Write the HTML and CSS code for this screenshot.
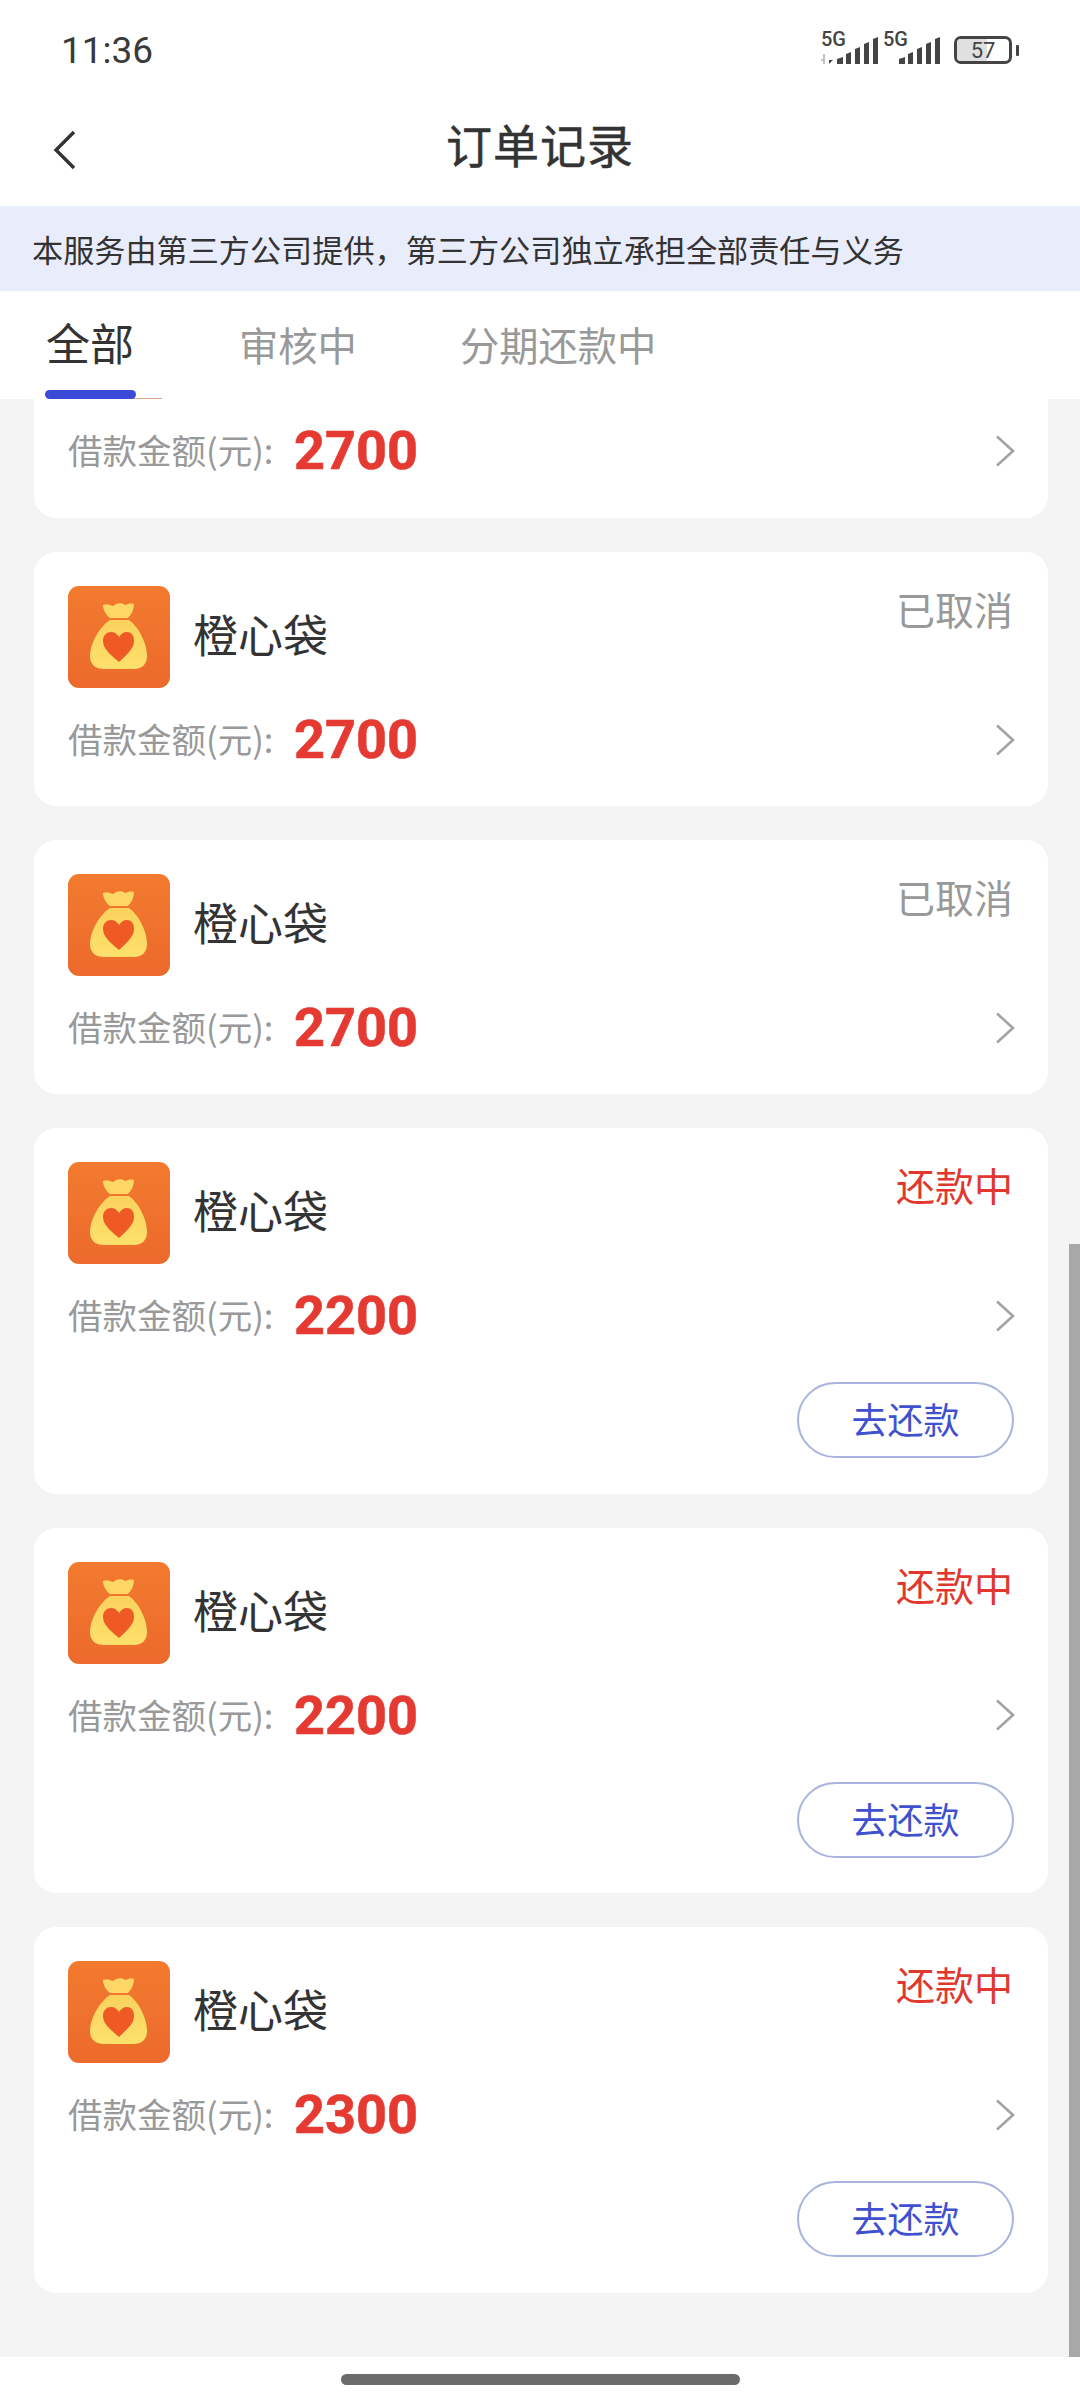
FILE: index.html
```html
<!DOCTYPE html>
<html lang="zh-CN">
<head>
  <meta charset="UTF-8">
  <meta name="viewport" content="width=device-width, initial-scale=1.0">
  <title>订单记录</title>
  <link rel="stylesheet" href="styles.css">
</head>
<body>
  <svg class="defs" width="0" height="0">
    <defs>
      <linearGradient id="bag-bg" x1="0" y1="0" x2="0" y2="1">
        <stop offset="0" stop-color="#f27a2e"/>
        <stop offset="1" stop-color="#ec6a2c"/>
      </linearGradient>
      <linearGradient id="bag-fill" x1="0" y1="0" x2="0" y2="1">
        <stop offset="0" stop-color="#fad25e"/>
        <stop offset="1" stop-color="#fde06c"/>
      </linearGradient>
      <symbol id="logo" viewBox="0 0 102 102">
        <rect width="102" height="102" rx="11" fill="url(#bag-bg)"/>
        <path d="M35 19c4-2 7 0 10 1 3-3 9-4 12-1 3-1 6-2 9-1 0 5-2 10-6 14H42c-4-3-7-8-7-13z" fill="#fcd766"/>
        <path d="M42 34h19c10 7 18 24 18 36 0 9-6 13-13 13H36c-8 0-14-4-14-13 0-12 9-29 20-36z" fill="url(#bag-fill)"/>
        <path d="M51 76C43 69 35 63 35 55c0-6 4-9 8-9 4 0 6 2 8 5 2-3 4-5 8-5 4 0 7 3 7 9 0 8-8 14-15 21z" fill="#ef5a24"/>
      </symbol>
      <symbol id="chevron" viewBox="0 0 20 34">
        <path d="M2 2.5 18 17 2 31.5" fill="none" stroke="#a3a3a3" stroke-width="2.6"/>
      </symbol>
      <symbol id="bars" viewBox="0 0 42 27">
        <path d="M0 27v-5l6-2v7zM9 27V17l5-2v12zM18 27V12l5-2v17zM27 27V7l5-2v22zM36 27V2l5-2v27z" fill="#444"/>
      </symbol>
    </defs>
  </svg>

  <div class="status-bar">
    <span class="time">11:36</span>
    <div class="status-icons">
      <div class="net">
        <span class="net-label">5G</span>
        <svg class="arrows" width="13" height="10" viewBox="0 0 13 10">
          <path d="M3 0v10M0 6h3" stroke="#b5b5b5" stroke-width="1.6" fill="none"/>
          <path d="M8 0v10l4-4H8" fill="#444"/>
        </svg>
        <svg class="bars"><use href="#bars"/></svg>
      </div>
      <div class="net net-second">
        <span class="net-label">5G</span>
        <svg class="bars"><use href="#bars"/></svg>
      </div>
      <div class="battery">
        <div class="battery-level"></div>
        <span class="battery-text">57</span>
      </div>
      <div class="battery-tip"></div>
    </div>
  </div>

  <div class="nav">
    <svg class="back" width="28" height="42" viewBox="0 0 28 42">
      <path d="M24 3 6 21l18 18" fill="none" stroke="#333" stroke-width="3.4"/>
    </svg>
    <h1 class="title">订单记录</h1>
  </div>

  <div class="notice">本服务由第三方公司提供，第三方公司独立承担全部责任与义务</div>

  <div class="tabs">
    <div class="tab active">全部</div>
    <div class="tab tab-audit">审核中</div>
    <div class="tab tab-repay">分期还款中</div>
    <div class="tab-line"></div>
    <div class="tab-peek"></div>
  </div>

  <div class="list">
    <div class="list-inner">
      <div class="card card-cut">
        <div class="row"><span class="label">借款金额(元):</span><span class="amount">2700</span><svg class="chev"><use href="#chevron"/></svg></div>
      </div>
      <div class="card">
        <div class="head"><svg class="logo"><use href="#logo"/></svg><span class="name">橙心袋</span><span class="state off">已取消</span></div>
        <div class="row"><span class="label">借款金额(元):</span><span class="amount">2700</span><svg class="chev"><use href="#chevron"/></svg></div>
      </div>
      <div class="card">
        <div class="head"><svg class="logo"><use href="#logo"/></svg><span class="name">橙心袋</span><span class="state off">已取消</span></div>
        <div class="row"><span class="label">借款金额(元):</span><span class="amount">2700</span><svg class="chev"><use href="#chevron"/></svg></div>
      </div>
      <div class="card card-tall">
        <div class="head"><svg class="logo"><use href="#logo"/></svg><span class="name">橙心袋</span><span class="state on">还款中</span></div>
        <div class="row"><span class="label">借款金额(元):</span><span class="amount">2200</span><svg class="chev"><use href="#chevron"/></svg></div>
        <div class="actions"><div class="btn">去还款</div></div>
      </div>
      <div class="card card-tall">
        <div class="head"><svg class="logo"><use href="#logo"/></svg><span class="name">橙心袋</span><span class="state on">还款中</span></div>
        <div class="row"><span class="label">借款金额(元):</span><span class="amount">2200</span><svg class="chev"><use href="#chevron"/></svg></div>
        <div class="actions"><div class="btn">去还款</div></div>
      </div>
      <div class="card card-tall">
        <div class="head"><svg class="logo"><use href="#logo"/></svg><span class="name">橙心袋</span><span class="state on">还款中</span></div>
        <div class="row"><span class="label">借款金额(元):</span><span class="amount">2300</span><svg class="chev"><use href="#chevron"/></svg></div>
        <div class="actions"><div class="btn">去还款</div></div>
      </div>
    </div>
    <div class="scrollbar"></div>
  </div>

  <div class="home-bar"><div class="home-pill"></div></div>
</body>
</html>
```

FILE: styles.css
```css
html, body {
  margin: 0;
  padding: 0;
  background-color: #fff;
}

body {
  width: 1080px;
  height: 2400px;
  overflow: hidden;
  font-family: "Noto Sans CJK SC", "Noto Sans", sans-serif;
  color: #333;
}

.defs {
  display: block;
  height: 0;
}

.status-bar {
  height: 98px;
  display: flex;
  align-items: center;
  justify-content: space-between;
  padding: 2px 61px 0 61px;
  box-sizing: border-box;
}

.time {
  font-family: Roboto, sans-serif;
  font-size: 37px;
  color: #3a3a3a;
}

.status-icons {
  display: flex;
  align-items: center;
}

.net {
  position: relative;
  width: 58px;
  height: 32px;
  margin-right: 4px;
}

.net-second {
  margin-right: 13px;
}

.net-label {
  position: absolute;
  left: 0;
  top: -3px;
  font-family: Roboto, sans-serif;
  font-weight: 500;
  font-size: 20px;
  line-height: 16px;
  color: #444;
}

.arrows {
  position: absolute;
  left: 0;
  bottom: 2px;
}

.bars {
  position: absolute;
  right: 0;
  bottom: 2px;
  width: 42px;
  height: 27px;
}

.battery {
  position: relative;
  width: 52px;
  height: 22px;
  border: 3px solid #444;
  border-radius: 7px;
  overflow: hidden;
}

.battery-level {
  height: 100%;
  width: 57%;
  background-color: #e0e0e0;
}

.battery-text {
  position: absolute;
  left: 0;
  right: 0;
  top: 0;
  text-align: center;
  font-family: Roboto, sans-serif;
  font-size: 22px;
  line-height: 23px;
  color: #444;
}

.battery-tip {
  width: 3px;
  height: 11px;
  margin-left: 4px;
  background-color: #444;
  border-radius: 1px;
}

.nav {
  position: relative;
  height: 108px;
  padding-bottom: 18px;
  box-sizing: border-box;
  display: flex;
  align-items: center;
  justify-content: center;
}

.back {
  position: absolute;
  left: 50px;
  top: 31px;
}

.title {
  margin: 0;
  font-size: 46px;
  font-weight: 400;
  line-height: 60px;
  letter-spacing: 1px;
  color: #333;
  -webkit-text-stroke: 0.5px #333;
}

.notice {
  height: 85px;
  padding-left: 32px;
  font-size: 31.15px;
  line-height: 85px;
  background-color: #e9edfb;
  color: #333;
  white-space: nowrap;
}

.tabs {
  position: relative;
  z-index: 2;
  height: 108px;
  display: flex;
  background-color: #fff;
}

.tab {
  font-size: 39.3px;
  line-height: 106px;
  color: #999;
  white-space: nowrap;
}

.tab.active {
  margin-left: 46px;
  font-size: 44px;
  color: #333;
  line-height: 102px;
}

.tab-audit {
  margin-left: 105px;
}

.tab-repay {
  margin-left: 103px;
}

.tab-line {
  position: absolute;
  left: 45px;
  top: 99px;
  width: 91px;
  height: 9px;
  border-radius: 5px;
  background-color: #3b4bd8;
}

.tab-peek {
  position: absolute;
  left: 75px;
  top: 107px;
  width: 87px;
  height: 1px;
  background-color: #d9a58c;
  z-index: -1;
}

.list {
  position: relative;
  height: 1958px;
  overflow: hidden;
  background-color: #f4f4f4;
}

.list-inner {
  padding: 0 32px 0 34px;
  display: flex;
  flex-direction: column;
  gap: 34px;
}

.card {
  height: 254px;
  padding: 34px 34px 0 34px;
  box-sizing: border-box;
  background-color: #fff;
  border-radius: 22px;
}

/* first card is scrolled under the tabs, only its lower part shows */
.card-cut {
  height: 119px;
  padding-top: 17px;
  border-radius: 0 0 22px 22px;
}

.card-cut .row {
  margin-top: 0;
}

.card-tall {
  height: 365.5px;
}

.head {
  display: flex;
  align-items: flex-start;
  height: 102px;
}

.logo {
  width: 102px;
  height: 102px;
  flex: none;
}

.name {
  margin-left: 23px;
  font-size: 45px;
  line-height: 96px;
  color: #333;
}

.state {
  margin-left: auto;
  margin-right: 1px;
  margin-top: -6px;
  font-size: 39px;
  line-height: 56px;
}

.off {
  color: #999;
}

.on {
  color: #e0382f;
}

.row {
  display: flex;
  align-items: center;
  height: 66px;
  margin-top: 17px;
}

.label {
  font-size: 34.5px;
  color: #999;
  white-space: nowrap;
  width: 226px;
}

.amount {
  margin-top: 4px;
  font-family: Roboto, sans-serif;
  font-weight: 700;
  font-size: 54px;
  line-height: 66px;
  color: #e53a32;
  -webkit-text-stroke: 0.6px #e53a32;
}

.chev {
  margin-left: auto;
  margin-right: -1px;
  margin-top: 3px;
  width: 20px;
  height: 34px;
}

.actions {
  display: flex;
  justify-content: flex-end;
  margin-top: 35px;
}

.btn {
  width: 217px;
  height: 76px;
  box-sizing: border-box;
  border: 2px solid #a9b3de;
  border-radius: 38px;
  text-align: center;
  font-size: 36px;
  line-height: 68px;
  color: #3f51cf;
}

.scrollbar {
  position: absolute;
  right: 0;
  top: 845px;
  bottom: 0;
  width: 11px;
  background-color: #a8a8a8;
}

.home-bar {
  height: 43px;
  padding-top: 17px;
  box-sizing: border-box;
  display: flex;
  justify-content: center;
  background-color: #fff;
}

.home-pill {
  width: 399px;
  height: 11px;
  border-radius: 6px;
  background-color: #6b6b6b;
}
```
